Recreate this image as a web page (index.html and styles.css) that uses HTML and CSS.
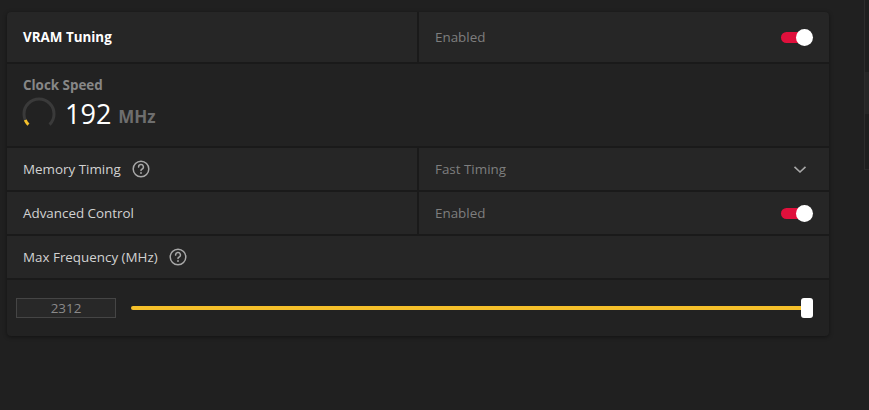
FILE: index.html
```html
<!DOCTYPE html>
<html>
<head>
<meta charset="utf-8"/>
<title>VRAM Tuning</title>
<link rel="stylesheet" href="styles.css">
</head>
<body>
<div class="page">
  <div class="card">
    <div class="row split head">
      <div class="cell"><span class="title">VRAM Tuning</span></div>
      <div class="cell value">
        <span>Enabled</span>
        <span class="toggle"><span class="knob"></span></span>
      </div>
    </div>

    <div class="clock">
      <div class="clock-label">Clock Speed</div>
      <div class="clock-value">
        <svg class="gauge" width="36" height="36" viewBox="0 0 36 36">
          <path d="M7.4 28.6 A15 15 0 1 1 28.6 28.6" fill="none" stroke="#3a3a3a" stroke-width="3"/>
          <path d="M7.4 28.6 A15 15 0 0 1 4.2 24" fill="none" stroke="#f5c02a" stroke-width="3"/>
        </svg>
        <span class="num">192</span>
        <span class="unit">MHz</span>
      </div>
    </div>

    <div class="row split">
      <div class="cell">
        <span>Memory Timing</span>
        <svg class="help" width="18" height="18" viewBox="0 0 18 18">
          <circle cx="9" cy="9" r="7.8" fill="none" stroke="#a8a8a8" stroke-width="1.5"/>
          <path d="M6.6 7.1 A2.4 2.4 0 1 1 9.9 9.2 C9.2 9.5 9 9.9 9 10.6" fill="none" stroke="#a8a8a8" stroke-width="1.5" stroke-linecap="round"/>
          <circle cx="9" cy="13" r="0.95" fill="#a8a8a8"/>
        </svg>
      </div>
      <div class="cell value">
        <span>Fast Timing</span>
        <svg class="chevron" width="14" height="9" viewBox="0 0 14 9">
          <path d="M1.5 1.8 L7 7 L12.5 1.8" fill="none" stroke="#a8a8a8" stroke-width="1.6"/>
        </svg>
      </div>
    </div>

    <div class="row split">
      <div class="cell"><span>Advanced Control</span></div>
      <div class="cell value">
        <span>Enabled</span>
        <span class="toggle"><span class="knob"></span></span>
      </div>
    </div>

    <div class="row">
      <div class="cell">
        <span>Max Frequency (MHz)</span>
        <svg class="help" width="18" height="18" viewBox="0 0 18 18">
          <circle cx="9" cy="9" r="7.8" fill="none" stroke="#a8a8a8" stroke-width="1.5"/>
          <path d="M6.6 7.1 A2.4 2.4 0 1 1 9.9 9.2 C9.2 9.5 9 9.9 9 10.6" fill="none" stroke="#a8a8a8" stroke-width="1.5" stroke-linecap="round"/>
          <circle cx="9" cy="13" r="0.95" fill="#a8a8a8"/>
        </svg>
      </div>
    </div>

    <div class="slider-row">
      <div class="num-box">2312</div>
      <div class="slider">
        <div class="track"></div>
        <div class="thumb"></div>
      </div>
    </div>
  </div>

  <div class="side">
    <div class="side-block"></div>
  </div>
</div>
</body>
</html>
```

FILE: styles.css
```css
body {
  margin: 0;
  background-color: #202020;
  font-family: "Open Sans", "Noto Sans", sans-serif;
  font-size: 13.4px;
  color: #d2d2d2;
}

.page {
  display: flex;
  align-items: flex-start;
  padding: 12px 0 0 7px;
  height: 398px;
  overflow: hidden;
}

.card {
  width: 822px;
  flex-shrink: 0;
  display: flex;
  flex-direction: column;
  gap: 2px;
  background-color: #1a1a1a;
  border-radius: 4px;
  overflow: hidden;
  box-shadow: 0 1px 4px rgba(0, 0, 0, 0.45);
}

.row {
  height: 42px;
  display: grid;
  grid-template-columns: 1fr;
}

.row.split {
  grid-template-columns: 1fr 1fr;
  gap: 2px;
}

.row.head {
  height: 50px;
}

.cell {
  background-color: #262626;
  display: flex;
  align-items: center;
  gap: 11px;
  padding: 0 16px;
}

.cell.value {
  justify-content: space-between;
  color: #7e7e7e;
}

.title {
  color: #ffffff;
  font-weight: 700;
}

.help {
  display: block;
}

.chevron {
  display: block;
  margin-right: 6px;
}

.toggle {
  width: 32px;
  height: 17px;
  position: relative;
}

.toggle::before {
  content: "";
  position: absolute;
  left: 0;
  top: 3px;
  width: 26px;
  height: 11px;
  border-radius: 6px;
  background-color: #e0103c;
}

.knob {
  position: absolute;
  right: 0;
  top: 0;
  width: 17px;
  height: 17px;
  border-radius: 50%;
  background-color: #ffffff;
}

.clock {
  height: 82px;
  background-color: #222222;
  padding: 12px 16px 0;
  box-sizing: border-box;
}

.clock-label {
  color: #878787;
  font-weight: 700;
  line-height: 18px;
}

.clock-value {
  display: flex;
  align-items: center;
  margin: 2px 0 0 -2px;
}

.gauge {
  display: block;
}

.num {
  color: #ffffff;
  font-size: 27px;
  line-height: 36px;
  margin-left: 8px;
}

.unit {
  color: #6e6e6e;
  font-size: 17px;
  font-weight: 700;
  margin: 4px 0 0 7px;
}

.slider-row {
  height: 56px;
  background-color: #222222;
  display: flex;
  align-items: center;
  padding: 0 16px 0 9px;
}

.num-box {
  width: 100px;
  height: 20px;
  box-sizing: border-box;
  border: 1px solid #454545;
  background-color: #282828;
  color: #8a8a8a;
  text-align: center;
  line-height: 18px;
  font-size: 13.4px;
}

.slider {
  flex: 1;
  margin-left: 15px;
  height: 20px;
  display: flex;
  align-items: center;
}

.track {
  flex: 1;
  height: 4px;
  border-radius: 2px;
  background-color: #f5c02a;
}

.thumb {
  width: 12px;
  height: 20px;
  border-radius: 3px;
  background-color: #ffffff;
  margin-left: -2px;
}

.side {
  flex-shrink: 0;
  margin-left: 35px;
  margin-top: -12px;
  width: 12px;
  height: 170px;
  border-left: 1px solid #2c2c2c;
  border-bottom: 1px solid #2a2a2a;
  background-color: #1e1e1e;
  padding-top: 72px;
  box-sizing: border-box;
}

.side-block {
  height: 42px;
  background-color: #262626;
}
```
